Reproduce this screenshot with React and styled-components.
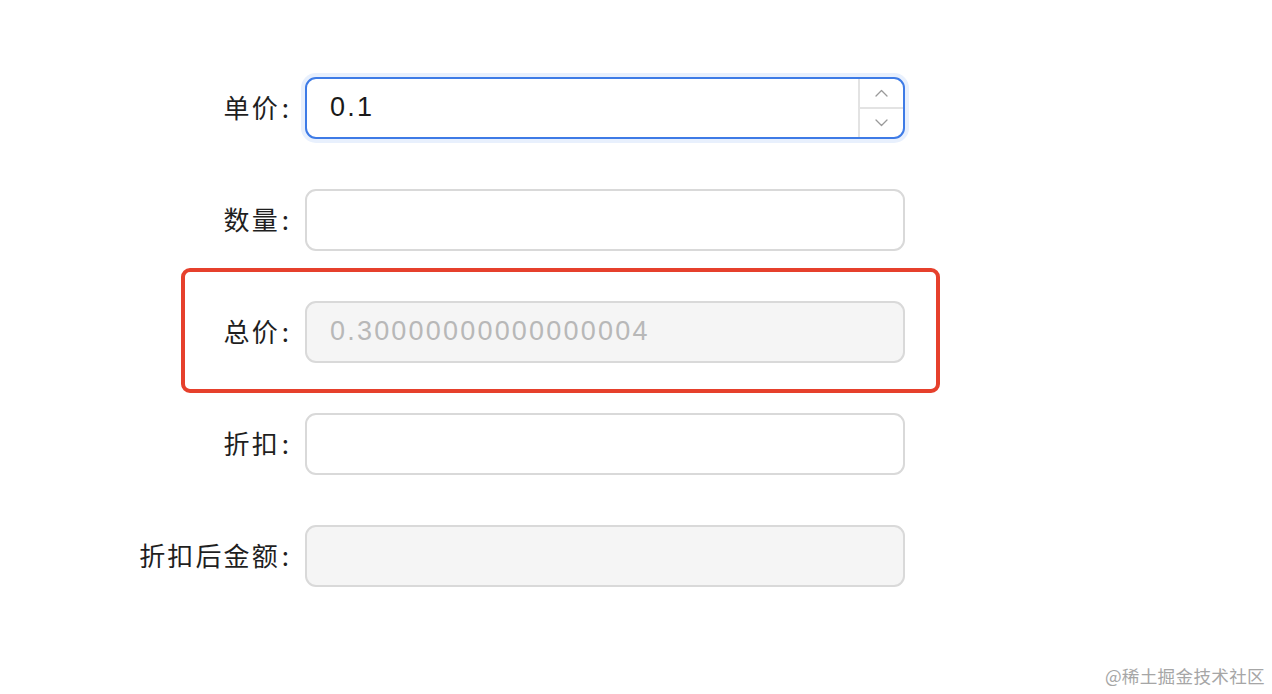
import React from "react";
import styled, { createGlobalStyle } from "styled-components";

const Global = createGlobalStyle`
  html, body { margin: 0; padding: 0; background: #ffffff; }
  body {
    font-family: "Liberation Sans", "Noto Sans CJK SC", sans-serif;
    color: rgba(0, 0, 0, 0.88);
  }
`;

const Page = styled.div`
  position: relative;
  width: 1272px;
  height: 694px;
  overflow: hidden;
  background: #fff;
`;

const Form = styled.div`
  display: flex;
  flex-direction: column;
  gap: 50px;
  padding-top: 77px;
`;

const Row = styled.div`
  display: flex;
  align-items: center;
  height: 62px;
`;

const Label = styled.label`
  width: 305px;
  box-sizing: border-box;
  padding-right: 16px;
  padding-bottom: 3px;
  text-align: right;
  font-family: "Noto Sans CJK SC", sans-serif;
  font-size: 26px;
  letter-spacing: 2.1px;
  color: #1f1f1f;
  white-space: nowrap;
  &::after {
    content: ":";
    margin-left: 2px;
    letter-spacing: 0;
  }
`;

const Box = styled.div`
  position: relative;
  display: flex;
  align-items: stretch;
  width: 600px;
  height: 62px;
  box-sizing: border-box;
  border: 2px solid ${(p) => (p.$focused ? "#3e7be6" : "#d9d9d9")};
  border-radius: 11px;
  background: ${(p) => (p.$disabled ? "#f5f5f5" : "#ffffff")};
  box-shadow: ${(p) => (p.$focused ? "0 0 0 4px #e8f0fd" : "none")};
  overflow: hidden;
`;

const Field = styled.div`
  flex: 1;
  display: flex;
  align-items: center;
  padding-left: 23px;
  padding-bottom: 1px;
  font-family: "Liberation Sans", sans-serif;
  font-size: 27px;
  letter-spacing: 2.2px;
  color: ${(p) => (p.$disabled ? "#b8b8b8" : "#1a1a1a")};
`;

const Handler = styled.div`
  width: 43px;
  display: flex;
  flex-direction: column;
  border-left: 2px solid #e3e3e3;
`;

const Step = styled.div`
  flex: 1;
  display: flex;
  align-items: center;
  justify-content: center;
  & + & {
    border-top: 2px solid #e3e3e3;
  }
`;

const Mark = styled.div`
  position: absolute;
  left: 181px;
  top: 268px;
  width: 759px;
  height: 125px;
  box-sizing: border-box;
  border: 4px solid #e6402c;
  border-radius: 9px;
  pointer-events: none;
`;

const Watermark = styled.div`
  position: absolute;
  right: 7px;
  bottom: 6px;
  font-family: "Noto Sans CJK SC", sans-serif;
  font-size: 17.6px;
  color: #a6a6a6;
  letter-spacing: 0.3px;
`;

const Chevron = ({ up }) => (
  <svg width="13" height="8" viewBox="0 0 13 8" fill="none">
    <path
      d={up ? "M1 7 L6.5 1.5 L12 7" : "M1 1 L6.5 6.5 L12 1"}
      stroke="#9a9a9a"
      strokeWidth="1.3"
      strokeLinecap="round"
      strokeLinejoin="round"
    />
  </svg>
);

const items = [
  { label: "单价", value: "0.1", focused: true },
  { label: "数量", value: "" },
  { label: "总价", value: "0.30000000000000004", disabled: true },
  { label: "折扣", value: "" },
  { label: "折扣后金额", value: "", disabled: true },
];

export default function App() {
  return (
    <Page>
      <Global />
      <Form>
        {items.map((it) => (
          <Row key={it.label}>
            <Label>{it.label}</Label>
            <Box $focused={it.focused} $disabled={it.disabled}>
              <Field $disabled={it.disabled}>{it.value}</Field>
              {it.focused && (
                <Handler>
                  <Step>
                    <Chevron up />
                  </Step>
                  <Step>
                    <Chevron />
                  </Step>
                </Handler>
              )}
            </Box>
          </Row>
        ))}
      </Form>
      <Mark />
      <Watermark>@稀土掘金技术社区</Watermark>
    </Page>
  );
}
